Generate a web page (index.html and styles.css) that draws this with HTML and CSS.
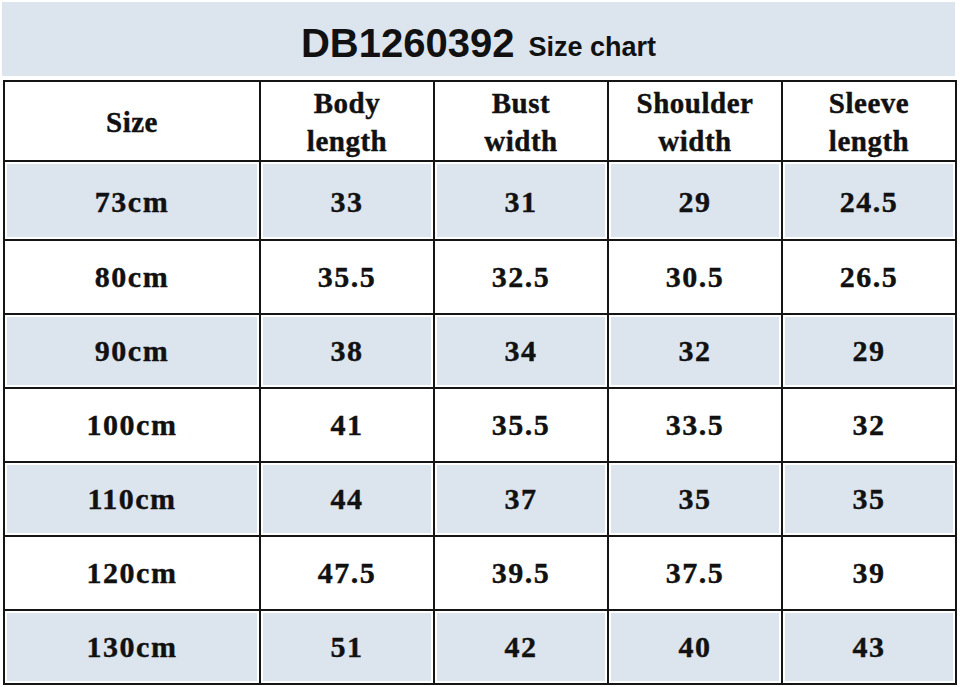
FILE: index.html
```html
<!DOCTYPE html>
<html>
<head>
<meta charset="utf-8">
<link rel="stylesheet" href="styles.css">
</head>
<body>
<div class="page">
  <div class="title-band">
    <span class="code">DB1260392</span><span class="sub">Size chart</span>
  </div>
  <table class="chart">
    <colgroup>
      <col class="c-size"><col class="c-val"><col class="c-val"><col class="c-val"><col class="c-val">
    </colgroup>
    <tr class="head">
      <th>Size</th><th>Body<br>length</th><th>Bust<br>width</th><th>Shoulder<br>width</th><th>Sleeve<br>length</th>
    </tr>
    <tr class="blue first"><td>73cm</td><td>33</td><td>31</td><td>29</td><td>24.5</td></tr>
    <tr><td>80cm</td><td>35.5</td><td>32.5</td><td>30.5</td><td>26.5</td></tr>
    <tr class="blue"><td>90cm</td><td>38</td><td>34</td><td>32</td><td>29</td></tr>
    <tr><td>100cm</td><td>41</td><td>35.5</td><td>33.5</td><td>32</td></tr>
    <tr class="blue"><td>110cm</td><td>44</td><td>37</td><td>35</td><td>35</td></tr>
    <tr><td>120cm</td><td>47.5</td><td>39.5</td><td>37.5</td><td>39</td></tr>
    <tr class="blue"><td>130cm</td><td>51</td><td>42</td><td>40</td><td>43</td></tr>
  </table>
</div>
</body>
</html>
```
FILE: styles.css
```css
html, body {
  margin: 0;
  padding: 0;
  background: #ffffff;
}
.page {
  width: 960px;
  height: 687px;
  padding-top: 2px;
  box-sizing: border-box;
}
.title-band {
  margin-left: 2px;
  width: 953px;
  height: 74px;
  background: #dce4ee;
  display: flex;
  align-items: center;
  justify-content: center;
  gap: 14px;
  font-family: "Liberation Sans", Arial, sans-serif;
  font-weight: bold;
  color: #111;
  padding-top: 8px;
  box-sizing: border-box;
}
.title-band .code {
  font-size: 40px;
  line-height: 1;
}
.title-band .sub {
  font-size: 27px;
  line-height: 1;
  padding-top: 8px;
}
.chart {
  margin-top: 4px;
  margin-left: 3px;
  width: 952px;
  border-collapse: collapse;
  table-layout: fixed;
  font-family: "Liberation Serif", "Times New Roman", serif;
  font-weight: bold;
  color: #111;
  -webkit-text-stroke: 0.4px #111;
}
.c-size { width: 256px; }
.c-val { width: 174px; }
.chart th, .chart td {
  border: 2px solid #151515;
  text-align: center;
  vertical-align: middle;
  padding: 0;
}
.chart th {
  font-size: 29px;
  line-height: 38px;
  letter-spacing: 0.5px;
  height: 76px;
  padding-top: 2px;
}
.chart td {
  font-size: 30px;
  letter-spacing: 1.5px;
  height: 72px;
}
.chart tr.first td {
  height: 74px;
  padding-top: 3px;
}
.chart tr.blue td {
  background: #dce4ee;
  box-shadow: inset 0 0 0 2px #ffffff;
}
```
